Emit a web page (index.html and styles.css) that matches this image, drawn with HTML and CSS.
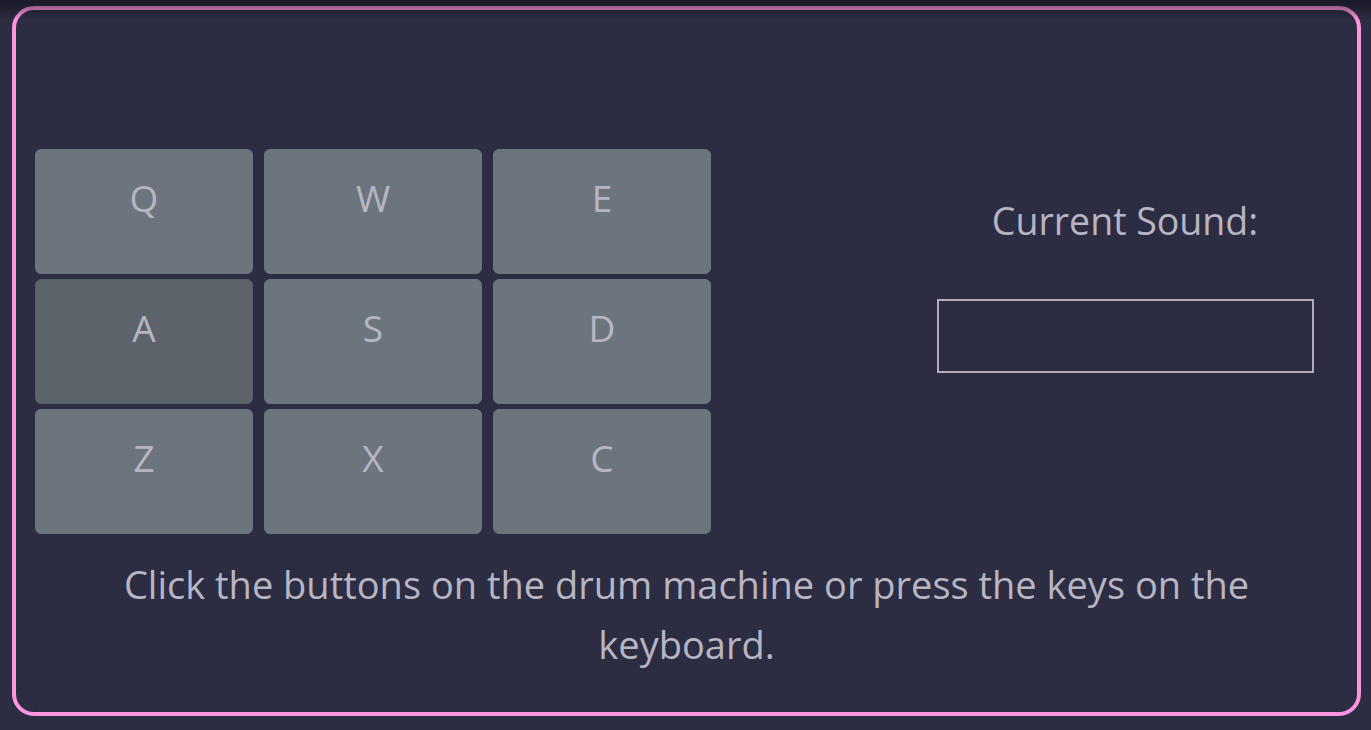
FILE: index.html
```html
<!DOCTYPE html>
<html lang="en">
<head>
<meta charset="utf-8">
<title>Drum Machine</title>
<link rel="stylesheet" href="styles.css">
</head>
<body>
<div class="shade"></div>
<main class="machine">
  <section class="row">
    <div class="pads">
      <button class="pad">Q</button>
      <button class="pad">W</button>
      <button class="pad">E</button>
      <button class="pad active">A</button>
      <button class="pad">S</button>
      <button class="pad">D</button>
      <button class="pad">Z</button>
      <button class="pad">X</button>
      <button class="pad">C</button>
    </div>
    <div class="panel">
      <p class="panel-title">Current Sound:</p>
      <div class="display"></div>
    </div>
  </section>
  <p class="hint">Click the buttons on the drum machine or press the keys on the keyboard.</p>
</main>
</body>
</html>
```
FILE: styles.css
```css
* { box-sizing: border-box; }
html, body { height: 100%; }
body {
  margin: 0;
  padding: 6px 10px 14px 12px;
  background: #2c2d42;
  font-family: "Segoe UI", "Open Sans", "Noto Sans", sans-serif;
  color: #b8b5c2;
}
.shade {
  position: fixed;
  top: 0; left: 0; right: 0;
  height: 20px;
  background: linear-gradient(rgba(10,10,16,0.55) 0, rgba(10,10,16,0.3) 10px, rgba(10,10,16,0) 20px);
  pointer-events: none;
  z-index: 5;
}
.machine {
  height: 100%;
  border: 4px solid #ff94e0;
  border-radius: 22px;
  padding: 139px 19px 0;
}
.row { display: flex; }
.pads {
  width: 676px;
  display: grid;
  grid-template-columns: repeat(3, 218px);
  grid-template-rows: repeat(3, 125px);
  column-gap: 11px;
  row-gap: 5px;
}
.pad {
  background: #6c757d;
  border: 1px solid #6c757d;
  border-radius: 6px;
  color: #b8b5c2;
  font-family: inherit;
  font-size: 37px;
  line-height: 48px;
  padding: 24px 0 0;
  display: flex;
  justify-content: center;
  align-items: flex-start;
}
.pad.active { background: #5c636a; border-color: #565e64; }
.panel {
  flex: 1;
  margin-left: 201px;
  padding-top: 42px;
  display: flex;
  flex-direction: column;
  align-items: center;
}
.panel-title {
  margin: 0;
  font-size: 37.5px;
  line-height: 60px;
}
.display {
  margin-top: 48px;
  width: 377px;
  height: 74px;
  border: 2px solid #b0adb8;
}
.hint {
  margin: 20px 0 0;
  padding: 0 40px;
  text-align: center;
  font-size: 38px;
  line-height: 60px;
}
```
